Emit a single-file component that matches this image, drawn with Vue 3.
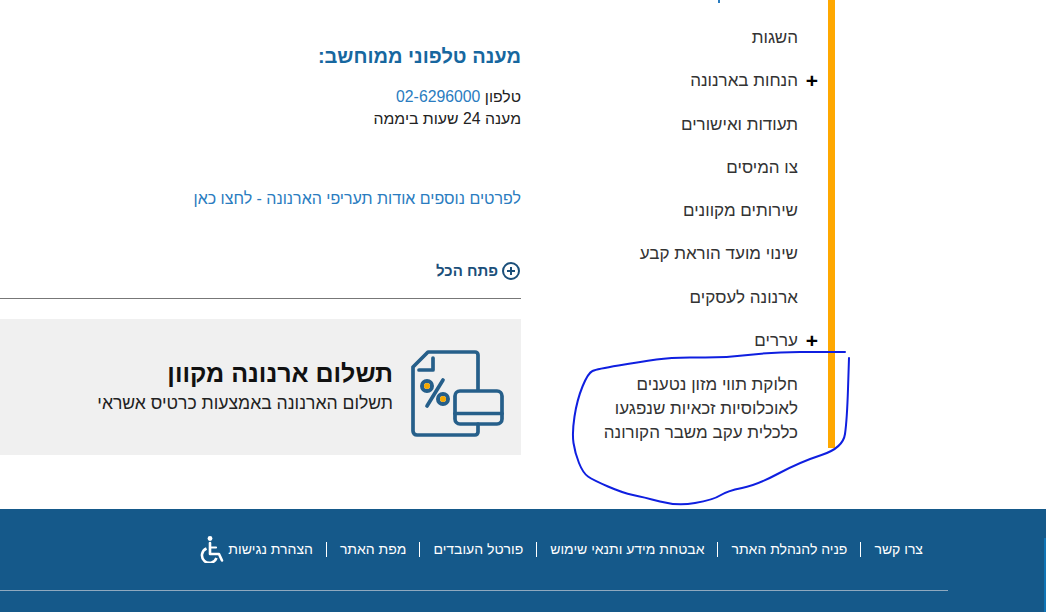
<script setup>
const navItems = [
  { label: 'השגות' },
  { label: 'הנחות בארנונה', plus: true },
  { label: 'תעודות ואישורים' },
  { label: 'צו המיסים' },
  { label: 'שירותים מקוונים' },
  { label: 'שינוי מועד הוראת קבע' },
  { label: 'ארנונה לעסקים' },
  { label: 'עררים', plus: true },
];

const footerLinks = ['צרו קשר', 'פניה להנהלת האתר', 'אבטחת מידע ותנאי שימוש', 'פורטל העובדים', 'מפת האתר'];

// the hand-drawn marker line around the last menu item
const marks = [
  [845, 352], [827, 352], [773, 352], [723, 358], [673, 357], [640, 362], [597, 369], [588, 373],
  [577, 400], [572, 433], [575, 453], [583, 473], [593, 480], [623, 493], [643, 497], [677, 506],
  [713, 500], [727, 491], [757, 485], [800, 462], [843, 448], [847, 420], [849, 358],
];

const scribble = marks.reduce((d, p, i) => {
  if (i === 0) return `M${p[0]} ${p[1]}`;
  const prev = marks[i - 1];
  return `${d}Q${prev[0]} ${prev[1]} ${(prev[0] + p[0]) / 2} ${(prev[1] + p[1]) / 2}`;
}, '') + 'L849 358';
</script>

<template>
  <div class="page" dir="rtl">
    <main class="main">
      <aside class="side">
        <ul class="nav">
          <li v-for="item in navItems" :key="item.label" class="nav-item">
            <span class="nav-plus"><template v-if="item.plus">+</template></span>
            <a class="nav-link">{{ item.label }}</a>
          </li>
          <li class="nav-item nav-multi">
            <span class="nav-plus"></span>
            <a class="nav-link">חלוקת תווי מזון נטענים<br>לאוכלוסיות זכאיות שנפגעו<br>כלכלית עקב משבר הקורונה</a>
          </li>
        </ul>
      </aside>

      <section class="content">
        <h2 class="title">מענה טלפוני ממוחשב:</h2>
        <p class="line">טלפון <a class="link">02-6296000</a></p>
        <p class="line">מענה 24 שעות ביממה</p>
        <p class="more"><a class="link">לפרטים נוספים אודות תעריפי הארנונה - לחצו כאן</a></p>
        <div class="open-all">
          <svg class="open-icon" viewBox="0 0 18 18" width="18" height="18">
            <circle cx="9" cy="9" r="8" fill="none" stroke="#1b4f7a" stroke-width="2" />
            <path d="M9 5v8M5 9h8" stroke="#1b4f7a" stroke-width="2" />
          </svg>
          <span>פתח הכל</span>
        </div>
        <div class="pay-card">
          <svg class="pay-icon" viewBox="410 349 94 90" width="94" height="90">
            <g fill="none" stroke="#265f8a" stroke-width="3.700" stroke-linecap="round" stroke-linejoin="round">
              <path d="M478 390V355a3 3 0 0 0-3-3H428L413 367v64a4 4 0 0 0 4 4h58a3 3 0 0 0 3-3v-8" />
              <path d="M433 358v12H419" />
              <path d="M443 380L427 406" />
              <circle cx="427" cy="386" r="5" stroke-width="4" />
              <circle cx="443" cy="399" r="5" stroke-width="4" />
              <rect x="455" y="391" width="47" height="33" rx="5" />
              <path d="M455 413.500h47" />
            </g>
            <circle cx="427" cy="386" r="3" fill="#f5a800" />
            <circle cx="443" cy="399" r="3" fill="#f5a800" />
          </svg>
          <div class="pay-text">
            <div class="pay-title">תשלום ארנונה מקוון</div>
            <div class="pay-sub">תשלום הארנונה באמצעות כרטיס אשראי</div>
          </div>
        </div>
      </section>
    </main>

    <footer class="footer">
      <div class="foot-links">
        <template v-for="link in footerLinks" :key="link">
          <a class="foot-link">{{ link }}</a>
          <span class="foot-sep"></span>
        </template>
        <a class="foot-link">הצהרת נגישות</a>
        <svg class="a11y" viewBox="0 0 24 28" width="24" height="28">
          <circle cx="10" cy="3.500" r="2.400" fill="#fff" />
          <path d="M10 8v11h9l3 6.500" fill="none" stroke="#fff" stroke-width="2.600" stroke-linejoin="round" stroke-linecap="round" />
          <path d="M10 12.500h6" stroke="#fff" stroke-width="2.200" stroke-linecap="round" />
          <path d="M6.500 13.500a7.500 7.500 0 1 0 10 9.500" fill="none" stroke="#fff" stroke-width="2.600" />
        </svg>
      </div>
      <div class="foot-rule"></div>
    </footer>

    <svg class="scribble" viewBox="0 0 1046 612" width="1046" height="612">
      <path :d="scribble" fill="none" stroke="#0f1fe0" stroke-width="2" stroke-linecap="round" stroke-linejoin="round" />
    </svg>
  </div>
</template>

<style>
html,body{margin:0;background:#fff;overflow:hidden}
</style>

<style scoped>
.page{position:relative;width:1046px;height:612px;overflow:hidden;font-family:"Liberation Sans",sans-serif;color:#222}
.main{display:flex;height:509px;box-sizing:border-box}
.side{width:314px;margin-right:211px;box-sizing:border-box;flex:none}
.nav{position:relative;list-style:none;margin:0;padding:26px 0 0;height:422px;box-sizing:content-box;border-right:7px solid #ffa800}
.nav::before{content:"";position:absolute;left:197px;top:0;width:2px;height:3px;background:#2a7cc0}
.nav-item{display:flex;align-items:flex-start;height:43.3px;font-size:17px;line-height:24px;color:#333}
.nav-plus{width:20px;margin-right:6px;margin-left:4px;flex:none;color:#000;font-weight:700;font-size:21px;line-height:23px;text-align:center}
.nav-multi{height:auto;margin-top:0.700px;line-height:24px}
.content{flex:none;width:521px;box-sizing:border-box}
.title{margin:42px 0 16px;font-size:20px;line-height:28px;font-weight:700;color:#17679f}
.line{margin:0;font-size:15.800px;line-height:22px;color:#222}
.link{color:#2a7cc0}
.more{margin:57px 0 0;font-size:16px;line-height:23px}
.open-all{display:flex;align-items:center;gap:4px;margin-top:47px;height:27px;padding:0 1px 14px 0;border-bottom:1px solid #777;font-size:15px;font-weight:700;color:#1b4f7a}
.pay-card{display:flex;align-items:flex-start;gap:17px;height:136px;margin-top:20px;padding:30px 17px 0 0;background:#f0f0f0;box-sizing:border-box}
.pay-icon{flex:none}
.pay-text{padding-top:8px}
.pay-title{font-size:25px;line-height:32px;font-weight:700;color:#111}
.pay-sub{margin-top:2px;font-size:17.600px;line-height:25px;color:#222}
.footer{position:relative;height:103px;background:#15598a;box-sizing:border-box;padding-top:26px}
.footer::after{content:"";position:absolute;right:0;top:29px;bottom:0;width:2px;background:#0f74b5}
.foot-links{display:flex;align-items:center;height:28px;margin-right:123px;color:#fff;font-size:14px}
.foot-link{color:#fff;white-space:nowrap}
.foot-sep{width:1px;height:15px;margin:0 13px;background:#fff}
.a11y{margin-right:4px}
.foot-rule{height:1px;margin:27px 98px 0 0;background:#8fa9bf}
.scribble{position:absolute;left:0;top:0;pointer-events:none}
</style>
